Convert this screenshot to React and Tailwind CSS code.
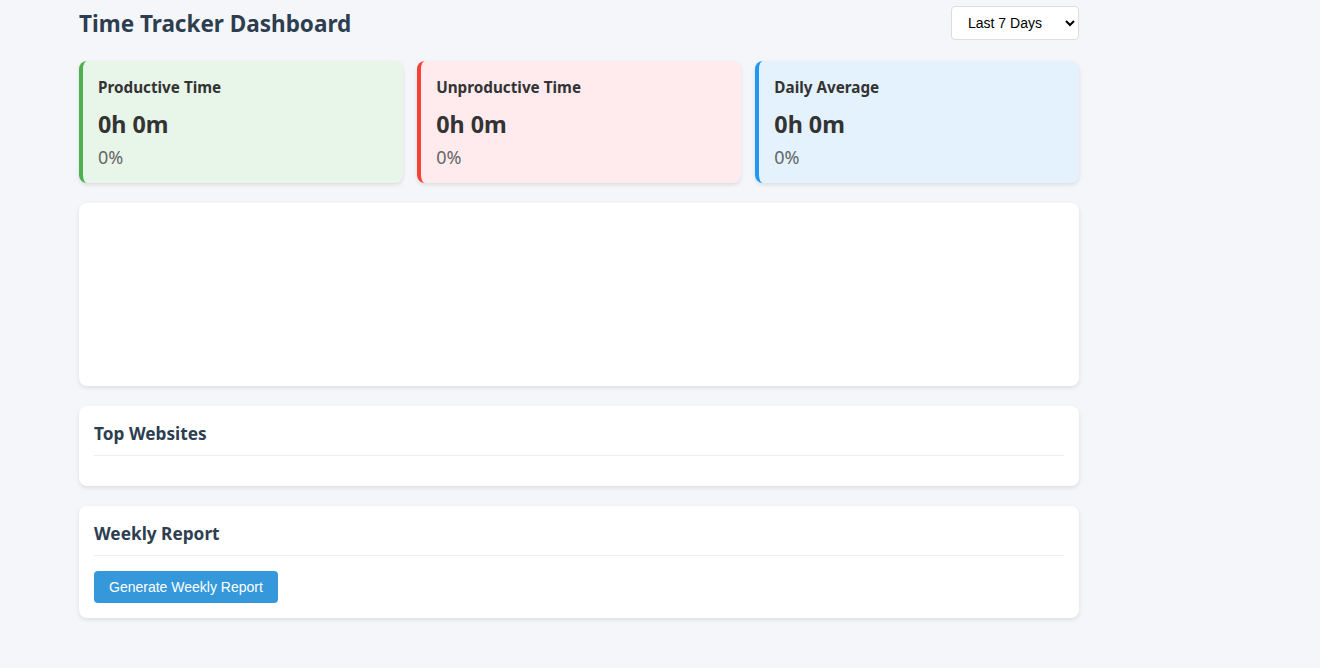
export default function App() {
  const cards = [
    { title: "Productive Time", bg: "bg-[#e8f5e9]", border: "border-[#4caf50]" },
    { title: "Unproductive Time", bg: "bg-[#ffebee]", border: "border-[#f44336]" },
    { title: "Daily Average", bg: "bg-[#e3f2fd]", border: "border-[#2196f3]" },
  ];
  return (
    <div className="min-h-[668px] bg-[#f5f6fa] font-['Noto_Sans',sans-serif]">
      <div className="w-[1000px] ml-[79px]">
        <div className="flex items-start justify-between pt-[6px] mb-[20px]">
          <h1 className="mt-[1px] text-[22.5px] leading-[34px] font-bold text-[#2c3e50]">Time Tracker Dashboard</h1>
          <select className="w-[128px] h-[34px] px-[12px] bg-white border border-[#dddddd] rounded-[4px] text-[14px] text-black font-['Liberation_Sans',Arial,sans-serif]">
            <option>Last 7 Days</option>
          </select>
        </div>
        <div className="grid grid-cols-3 gap-[14.5px]">
          {cards.map((c) => (
            <div key={c.title} className={`${c.bg} ${c.border} border-l-4 rounded-[8px] shadow-[0_2px_4px_rgba(0,0,0,0.1)] pl-[15px] pr-[15px] pt-[15px] pb-[14px] text-[#333333]`}>
              <h3 className="text-[15.25px] leading-[22px] font-bold">{c.title}</h3>
              <div className="mt-[10px] text-[23.3px] leading-[32px] font-bold">0h 0m</div>
              <div className="mt-[5px] text-[18px] leading-[24px] text-[#666666]">0%</div>
            </div>
          ))}
        </div>
        <div className="mt-[20px] h-[183px] bg-white rounded-[8px] shadow-[0_2px_4px_rgba(0,0,0,0.1)]"></div>
        <div className="mt-[20px] bg-white rounded-[8px] shadow-[0_2px_4px_rgba(0,0,0,0.1)] p-[15px]">
          <h2 className="text-[17.25px] leading-[26px] font-bold text-[#2c3e50] pb-[8px] border-b border-[#eeeeee]">Top Websites</h2>
          <div className="h-[15px]"></div>
        </div>
        <div className="mt-[20px] bg-white rounded-[8px] shadow-[0_2px_4px_rgba(0,0,0,0.1)] p-[15px]">
          <h2 className="text-[17.25px] leading-[26px] font-bold text-[#2c3e50] pb-[8px] border-b border-[#eeeeee]">Weekly Report</h2>
          <button className="mt-[15px] h-[32px] px-[15px] bg-[#3498db] text-white text-[14px] rounded-[4px] font-['Liberation_Sans',Arial,sans-serif]">Generate Weekly Report</button>
        </div>
      </div>
    </div>
  );
}
